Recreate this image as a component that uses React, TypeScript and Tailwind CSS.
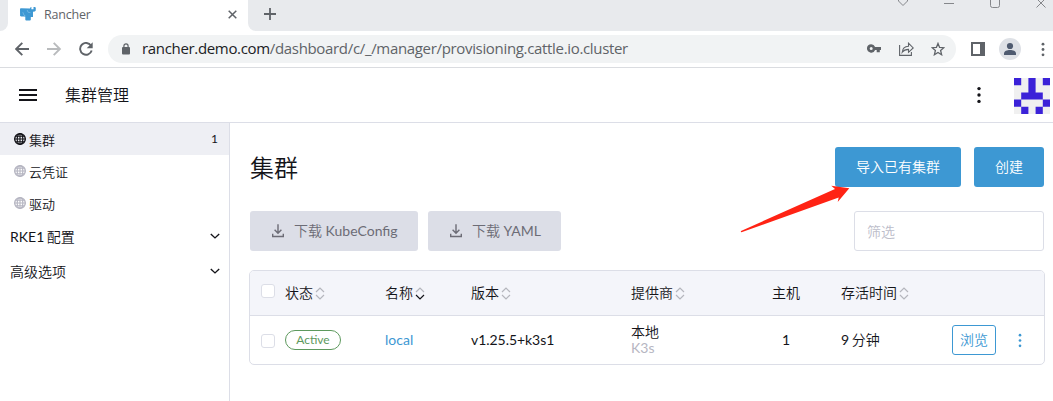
import type { ReactNode } from 'react';

const pixels = ['X.X.X', '..X..', '.XXX.', 'X...X', '.X.X.'];

function Identicon() {
  return (
    <svg className="block size-9" viewBox="0 0 36 36">
      <rect width="36" height="36" fill="#f0f0f0" />
      <path
        fill="#3b22d8"
        d={pixels
          .flatMap((row, y) => [...row].map((c, x) => (c === 'X' ? `M${x * 7.2} ${y * 7.2}h7.2v7.2h-7.2z` : '')))
          .join('')}
      />
    </svg>
  );
}

function Globe({ className }: { className: string }) {
  return (
    <svg className={`size-3 shrink-0 ${className}`} viewBox="0 0 12 12" fill="none" stroke="currentColor">
      <circle cx="6" cy="6" r="5.3" strokeWidth="1.4" />
      <ellipse cx="6" cy="6" rx="2.8" ry="5.3" strokeWidth="1.2" />
      <path d="M6 .6v10.8M.6 6h10.8M1.3 3.3h9.4M1.3 8.7h9.4" strokeWidth="1.1" />
    </svg>
  );
}

function Dots({ className, r }: { className: string; r: number }) {
  return (
    <svg className={`block w-1 shrink-0 ${className}`} viewBox="0 0 4 18" fill="currentColor">
      <circle cx="2" cy="2.6" r={r} />
      <circle cx="2" cy="9" r={r} />
      <circle cx="2" cy="15.4" r={r} />
    </svg>
  );
}

function Sort({ active = false }: { active?: boolean }) {
  return (
    <svg className="ml-[2px] h-[13px] w-[10px] shrink-0" viewBox="0 0 10 13" fill="none" strokeWidth="1.2">
      <path d="M1 5 5 1l4 4" stroke="#b5b6bd" />
      <path d="m1 8 4 4 4-4" stroke={active ? '#141419' : '#b5b6bd'} />
    </svg>
  );
}

function Download() {
  return (
    <svg className="mr-[9px] h-[14px] w-3 shrink-0" viewBox="0 0 12 14" fill="none" stroke="currentColor" strokeWidth="1.4">
      <path d="M6 .3v9M2.600 5.700 6 9.200l3.400-3.500M.7 9.800v2.700h10.600V9.800" />
    </svg>
  );
}

function Chevron() {
  return (
    <svg className="h-[7px] w-[10px]" viewBox="0 0 10 7" fill="none" stroke="#141419" strokeWidth="1.4">
      <path d="M.8.900 5 4.900 9.200.900" />
    </svg>
  );
}

function Checkbox() {
  return <span className="block size-[14px] rounded-[3px] border border-[#dcdee7] bg-white" />;
}

function NavItem({ label, active = false, count }: { label: string; active?: boolean; count?: string }) {
  return (
    <div className={`flex h-8 items-center pl-[14px] pr-[11px] text-[13px] ${active ? 'bg-[#eeeff4]' : ''}`}>
      <Globe className={active ? 'text-[#141419]' : 'text-[#b6b6c2]'} />
      <span className="ml-[3px] flex-1 pt-px leading-8">{label}</span>
      <span className="text-xs">{count}</span>
    </div>
  );
}

function NavGroup({ children, className }: { children: ReactNode; className: string }) {
  return (
    <div className={`flex items-center justify-between pl-[10px] pr-[9px] text-sm ${className}`}>
      <span>{children}</span>
      <Chevron />
    </div>
  );
}

const columns = 'grid grid-cols-[24px_100px_86px_160px_141px_69px_111px_1fr] items-center pl-[11px]';

function BrowserChrome() {
  return (
    <div className="font-['Open_Sans','Noto_Sans_CJK_SC',sans-serif]">
      <div className="flex h-[31px] bg-[#e8eaed]">
        <div className="w-2 bg-white">
          <div className="h-full rounded-br-lg bg-[#e8eaed]" />
        </div>
        <div className="flex w-60 items-center bg-white pl-3 pr-[11px]">
          <svg className="-mt-[3px] h-[14px] w-4" viewBox="0 0 16 14" fill="#3d98d3">
            <path d="M0 2.2Q0 1 1.2 1.2L9.8 1.4 10.5.8V0h.9v2.2h2.1V0h.8l1 .1.5 1.1-.1 2.500-1 .8-1.700.2v5.200L10.800 10v2.800l-.6.7H5.900l-.6-.7V9.800l-1.200-.2H1.200L.1 8.900z" />
            <path d="m2.800 5.200 1.200 3 1.500.8M7.200 3l.8 2.200 2.500.5" fill="none" stroke="#8bc4e8" strokeWidth=".6" />
          </svg>
          <span className="-mt-[2px] ml-2 flex-1 text-[12.5px] leading-4 tracking-[-0.2px] text-[#5f6368]">Rancher</span>
          <svg className="-mt-[3px] size-[9px]" viewBox="0 0 9 9" stroke="#5f6368" strokeWidth="1.5">
            <path d="m.7.7 7.6 7.6M8.3.7.7 8.3" />
          </svg>
        </div>
        <div className="w-2 bg-white">
          <div className="h-full rounded-bl-lg bg-[#e8eaed]" />
        </div>
        <svg className="ml-2 mt-2 size-3" viewBox="0 0 12 12" stroke="#5f6368" strokeWidth="1.8">
          <path d="M6 0v12M0 6h12" />
        </svg>
        <svg className="ml-auto h-[10px] w-[156px]" viewBox="0 0 156 10" fill="none" stroke="#85878b" strokeWidth="1">
          <path d="M1.500-.5v1.500L6 5.500l4.500-4.500v-1.500M47 3.500h10M93.500-2v7.500q0 2 2 2h5q2 0 2-2V-2M139.500-1.500l9 9M148.500-1.500l-9 9" />
        </svg>
      </div>
      <div className="flex h-[37px] items-center border-b border-[#dadce0] bg-white pl-[15px] pr-2 text-[#5f6368]">
        <svg className="h-[14px] w-[78px]" viewBox="0 0 78 14" fill="none" strokeWidth="1.9">
          <path d="M14 7H1.500M7.300.8 1.100 7l6.200 6.200" stroke="#5f6368" />
          <path d="M32 7h12.500M38.700.8 44.900 7l-6.200 6.200" stroke="#b9bbbd" />
          <path d="M76 3.600A5.900 5.900 0 1 0 76.700 8.500" stroke="#5f6368" />
          <path d="M77.700.3v6h-6z" fill="#5f6368" />
        </svg>
        <div className="ml-[15px] flex h-7 w-[848px] items-center rounded-full bg-[#f1f3f4] pl-[14px] pr-[11px]">
          <svg className="h-3 w-2" viewBox="0 0 8 12" fill="#5f6368">
            <rect y="4" width="8" height="7.500" rx="1" />
            <path d="M1.900 4.500V3a2.100 2.100 0 0 1 4.200 0v1.500" fill="none" stroke="#5f6368" strokeWidth="1.200" />
          </svg>
          <span className="-mt-[2px] ml-3 flex-1 text-[15px] leading-7 tracking-[-0.33px]">
            <span className="text-[#202124]">rancher.demo.com</span>/dashboard/c/_/manager/provisioning.cattle.io.cluster
          </span>
          <svg className="-mt-px h-[9px] w-[14px]" viewBox="0 0 14 9" fill="#5f6368" fillRule="evenodd">
            <path d="M4.200.2a4.200 4.200 0 0 1 3.900 2.700H14v3h-1.200v2.400H9.700V5.900H8.100A4.200 4.200 0 1 1 4.200.2m0 2.700a1.500 1.500 0 1 0 0 3 1.500 1.500 0 0 0 0-3" />
          </svg>
          <svg className="ml-[18px] h-[14px] w-[15px]" viewBox="0 0 15 14" fill="none" stroke="#5f6368" strokeWidth="1.100">
            <path d="M.6 3v10.400h11.800V10M3.200 10.300c.3-3.700 2.500-5.900 6.300-6V1.200l4.700 4.700-4.700 4.400V7.400c-2.800 0-4.800.8-6.300 2.900z" />
          </svg>
          <svg className="ml-[17px] size-[14px]" viewBox="0 0 14 14" fill="none" stroke="#5f6368" strokeWidth="1.300">
            <path d="m7 1.400 1.600 4 4.300.3-3.300 2.800 1 4.200L7 10.400l-3.600 2.300 1-4.200-3.300-2.800 4.300-.3z" />
          </svg>
        </div>
        <svg className="ml-[15px] size-[14px]" viewBox="0 0 14 14" fill="#5f6368" fillRule="evenodd">
          <path d="M0 0h14v14H0zM2 2v10h7V2z" />
        </svg>
        <svg className="ml-[14px] size-[22px]" viewBox="0 0 22 22" fill="#4f5b70">
          <circle cx="11" cy="11" r="11" fill="#dee1e6" />
          <circle cx="11" cy="8" r="3.100" />
          <path d="M5 17v-1.500c0-4.600 12-4.600 12 0V17z" />
        </svg>
        <Dots className="ml-auto mt-px h-[15px]" r={1.700} />
      </div>
    </div>
  );
}

export default function App() {
  return (
    <div className="relative flex h-[401px] w-[1053px] flex-col overflow-hidden bg-white font-['Lato','Noto_Sans_CJK_SC_DemiLight','Noto_Sans_CJK_SC',sans-serif] text-sm text-[#141419] [word-spacing:-1px]">
      <BrowserChrome />
      <header className="flex h-[55px] items-center border-b border-[#dcdee7] pl-[19px] pr-[3px]">
        <svg className="h-3 w-[18px]" viewBox="0 0 18 12" fill="#141419">
          <path d="M0 0h18v2H0zM0 5h18v2H0zM0 10h18v2H0z" />
        </svg>
        <span className="ml-7 flex-1 text-base">集群管理</span>
        <Dots className="h-[18px] text-[#141419]" r={1.7} />
        <div className="ml-[33px] mt-[2px]">
          <Identicon />
        </div>
      </header>
      <div className="flex flex-1">
        <nav className="w-[230px] border-r border-[#dcdee7]">
          <NavItem label="集群" active count="1" />
          <NavItem label="云凭证" />
          <NavItem label="驱动" />
          <NavGroup className="h-[35px]">RKE1 配置</NavGroup>
          <NavGroup className="h-[35px]">高级选项</NavGroup>
        </nav>
        <main className="flex-1 pl-[19px] pr-2 pt-6">
          <div className="flex h-10 items-center pl-px pr-px">
            <h1 className="flex-1 pt-[2px] text-2xl">集群</h1>
            <button className="h-10 w-[126px] rounded-[3px] bg-[#3d98d3] text-white">导入已有集群</button>
            <button className="ml-[13px] h-10 w-[70px] rounded-[3px] bg-[#3d98d3] text-white">创建</button>
          </div>
          <div className="mt-6 flex h-10 gap-[10px] pl-px pr-px text-[#6c6c76]">
            <button className="flex w-[168px] items-center rounded-[3px] bg-[#dcdee7] pl-[22px]">
              <Download />
              <span className="ml-px">下载 KubeConfig</span>
            </button>
            <button className="flex w-[133px] items-center rounded-[3px] bg-[#dcdee7] pl-[22px]">
              <Download />
              <span className="ml-px">下载 YAML</span>
            </button>
            <div className="ml-auto flex w-[190px] items-center rounded-[3px] border border-[#dcdee7] pl-3 pt-[2px] text-[#bcbdca]">筛选</div>
          </div>
          <div className="mt-[19px] h-[95px] overflow-hidden rounded-[5px] border border-[#dcdee7]">
            <div className={`${columns} h-[45px] border-b border-[#dcdee7] bg-[#f4f5fa]`}>
              <div className="-mt-[5px]">
                <Checkbox />
              </div>
              <span className="flex items-center">状态<Sort /></span>
              <span className="flex items-center">名称<Sort active /></span>
              <span className="flex items-center">版本<Sort /></span>
              <span className="flex items-center">提供商<Sort /></span>
              <span>主机</span>
              <span className="flex items-center">存活时间<Sort /></span>
            </div>
            <div className={`${columns} h-12`}>
              <div className="pt-[2px]">
                <Checkbox />
              </div>
              <span className="flex h-5 w-14 items-center justify-center rounded-full border border-[#5d995d] text-xs text-[#5d995d]">Active</span>
              <span className="text-[#3d98d3]">local</span>
              <span className="tracking-[-0.05px]">v1.25.5+k3s1</span>
              <span className="flex flex-col leading-4">
                <span>本地</span>
                <span className="text-[#b6b6c2]">K3s</span>
              </span>
              <span className="pl-[10px]">1</span>
              <span>9 分钟</span>
              <span className="flex items-center">
                <button className="h-[30px] w-11 rounded-[3px] border border-[#3d98d3] text-[#3d98d3]">浏览</button>
                <Dots className="ml-[22px] h-[15px] text-[#3d98d3]" r={1.6} />
              </span>
            </div>
          </div>
        </main>
      </div>
      <svg className="absolute left-[740px] top-[184px] h-[50px] w-[112px]" viewBox="0 0 112 50" fill="#ff2314">
        <path d="M1 47 95 4.900 91.300 1.700 109.300 4.300 97.700 18 98.700 13.500 1.500 48.300Q.5 48 1 47z" />
      </svg>
    </div>
  );
}
